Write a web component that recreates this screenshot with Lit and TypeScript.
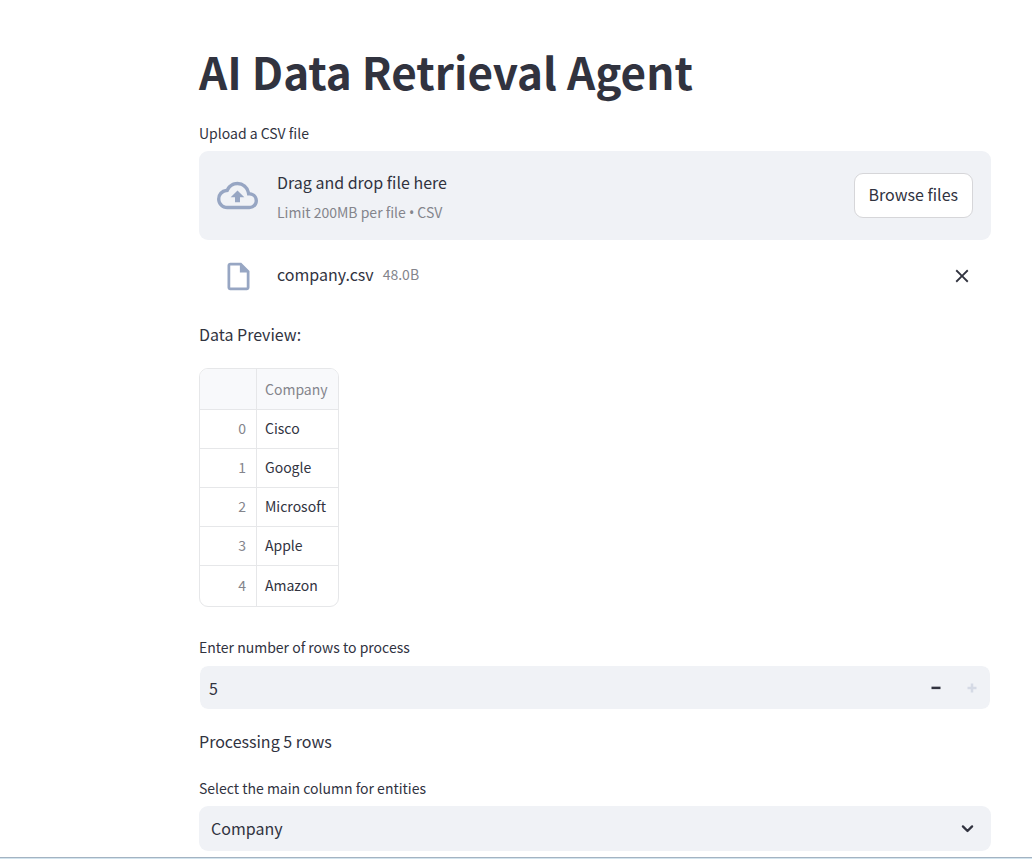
import { LitElement, html, css } from "lit";
import { customElement, state } from "lit/decorators.js";

@customElement("app-root")
export class AppRoot extends LitElement {
  @state() private fileName = "company.csv";
  @state() private fileSize = "48.0B";
  @state() private rows = 5;
  private companies = ["Cisco", "Google", "Microsoft", "Apple", "Amazon"];

  static styles = css`
    :host {
      display: block;
      font-family: "Noto Sans CJK SC", "Noto Sans", sans-serif;
      font-size: 16px;
      line-height: 28px;
      color: #31333f;
      background: #fff;
    }
    * { box-sizing: border-box; }
    button, input, select { font: inherit; color: inherit; margin: 0; }
    button { cursor: pointer; }
    svg { display: block; }
    main { padding: 42px 41px 6px 199px; }
    h1 { margin: 0 0 22px; font-size: 44px; line-height: 58px; font-weight: 700; }
    p { margin: 0; }
    .label { display: block; font-size: 14px; line-height: 22px; margin-bottom: 7px; }
    .dropzone {
      display: flex;
      align-items: center;
      padding: 17px 18px;
      border-radius: 9px;
      background: #f0f2f6;
    }
    .cloud { width: 41px; height: 41px; margin-right: 19px; color: #97a6c3; }
    .hint { flex: 1; }
    .limit { font-size: 14px; line-height: 22px; margin-top: 5px; color: #84858c; }
    .bullet { font-family: "Noto Sans", sans-serif; line-height: 1; }
    .browse {
      height: 45px;
      padding: 0 14px 3px;
      border: 1px solid #d6d6d9;
      border-radius: 9px;
      background: #fff;
    }
    .file { display: flex; align-items: center; height: 48px; padding: 0 18px; margin: 12px 0 20px; }
    .doc { width: 33px; height: 33px; margin: 0 22px 0 5px; color: #97a6c3; }
    .name, .size { padding-bottom: 5px; }
    .size { flex: 1; margin-left: 9px; font-size: 14px; color: #84858c; }
    .icon-button { display: grid; place-items: center; border: 0; padding: 0; background: none; }
    .remove { width: 22px; height: 22px; }
    .preview {
      width: fit-content;
      margin: 20px 0 29px;
      border: 1px solid #e6e7e9;
      border-radius: 9px;
      overflow: hidden;
    }
    table { border-collapse: separate; border-spacing: 0; font-size: 14px; line-height: 22px; }
    th, td { height: 39px; padding: 0 10px 2px 8px; border-bottom: 1px solid #e6e7e9; text-align: left; font-weight: 400; }
    thead th { height: 41px; padding-bottom: 0; background: #f8f9fb; color: #84858c; }
    th:first-child { width: 57px; border-right: 1px solid #e6e7e9; text-align: right; color: #84858c; }
    tbody tr:last-child > * { height: 40px; border-bottom: 0; }
    .number {
      display: flex;
      height: 45px;
      margin-bottom: 17px;
      border: 1px solid #fff;
      border-radius: 9px;
      background: #f0f2f6;
      background-clip: padding-box;
    }
    .number input {
      flex: 1;
      min-width: 0;
      padding: 0 9px;
      border: 0;
      background: none;
      outline: none;
      appearance: textfield;
    }
    .number input::-webkit-inner-spin-button { appearance: none; margin: 0; }
    .step { width: 36px; }
    .step:disabled { color: #d5dae5; cursor: default; }
    .status { margin-bottom: 22px; }
    .select { display: grid; position: relative; }
    .select select {
      height: 45px;
      padding: 0 44px 1px 12px;
      border: 0;
      border-radius: 9px;
      background: #f0f2f6;
      appearance: none;
    }
    .select svg { position: absolute; right: 12px; top: 11px; pointer-events: none; }
    footer { height: 2px; border-top: 1px solid #a3b3c2; background: #d3e4ee; }
  `;

  private setRows(n: number) {
    this.rows = Math.min(this.companies.length, Math.max(1, n || 1));
  }

  render() {
    return html`
      <main>
        <h1>AI Data Retrieval Agent</h1>
        <span class="label" id="upload">Upload a CSV file</span>
        <section class="dropzone" aria-labelledby="upload">
          <svg class="cloud" viewBox="0 0 24 24" fill="currentColor" aria-hidden="true">
            <path d="M19.35 10.04A7.49 7.49 0 0 0 12 4C9.11 4 6.6 5.64 5.35 8.04A5.994 5.994 0 0 0 0 14c0 3.31 2.69 6 6 6h13c2.76 0 5-2.24 5-5 0-2.64-2.05-4.78-4.65-4.96zM19 18H6c-2.21 0-4-1.79-4-4 0-2.05 1.53-3.76 3.56-3.97l1.07-.11.5-.95A5.469 5.469 0 0 1 12 6c2.62 0 4.88 1.86 5.39 4.43l.3 1.5 1.53.11A2.98 2.98 0 0 1 22 15c0 1.65-1.35 3-3 3zM8 13h2.55v3h2.9v-3H16l-4-4z"/>
          </svg>
          <div class="hint">
            <p>Drag and drop file here</p>
            <p class="limit">Limit 200MB per file <span class="bullet">•</span> CSV</p>
          </div>
          <button class="browse" type="button">Browse files</button>
        </section>
        <div class="file">
          <svg class="doc" viewBox="0 0 24 24" fill="currentColor" aria-hidden="true">
            <path d="M14 2H6c-1.1 0-1.99.9-1.99 2L4 20c0 1.1.89 2 1.99 2H18c1.1 0 2-.9 2-2V8l-6-6zM6 20V4h7v5h5v11H6z"/>
          </svg>
          <span class="name">${this.fileName}</span>
          <span class="size">${this.fileSize}</span>
          <button class="icon-button remove" type="button" aria-label="Remove file">
            <svg width="22" height="22" viewBox="0 0 24 24" fill="currentColor">
              <path d="M19 6.41L17.59 5 12 10.59 6.41 5 5 6.41 10.59 12 5 17.59 6.41 19 12 13.41 17.59 19 19 17.59 13.41 12z"/>
            </svg>
          </button>
        </div>
        <p>Data Preview:</p>
        <div class="preview">
          <table>
            <thead><tr><th></th><th scope="col">Company</th></tr></thead>
            <tbody>
              ${this.companies.map((c, i) => html`<tr><th scope="row">${i}</th><td>${c}</td></tr>`)}
            </tbody>
          </table>
        </div>
        <label class="label" for="rows">Enter number of rows to process</label>
        <div class="number">
          <input id="rows" type="number" min="1" max="5" .value=${String(this.rows)}
            @change=${(e: Event) => this.setRows(Number((e.target as HTMLInputElement).value))} />
          <button class="icon-button step" type="button" aria-label="Decrease" ?disabled=${this.rows <= 1}
            @click=${() => this.setRows(this.rows - 1)}>
            <svg width="18" height="18" viewBox="0 0 8 8" fill="currentColor"><path d="M2 3.4h4v1.1H2z"/></svg>
          </button>
          <button class="icon-button step" type="button" aria-label="Increase" ?disabled=${this.rows >= 5}
            @click=${() => this.setRows(this.rows + 1)}>
            <svg width="18" height="18" viewBox="0 0 8 8" fill="currentColor"><path d="M3.45 2h1.1v1.45H6v1.1H4.55V6h-1.1V4.55H2v-1.1h1.45z"/></svg>
          </button>
        </div>
        <p class="status">Processing ${this.rows} rows</p>
        <label class="label" for="column">Select the main column for entities</label>
        <div class="select">
          <select id="column"><option>Company</option></select>
          <svg width="23" height="23" viewBox="0 0 24 24" fill="none" stroke="currentColor" stroke-width="2.4" stroke-linecap="round" stroke-linejoin="round" aria-hidden="true">
            <path d="M7.2 9.8l4.8 4.8 4.8-4.8"/>
          </svg>
        </div>
      </main>
      <footer></footer>
    `;
  }
}
